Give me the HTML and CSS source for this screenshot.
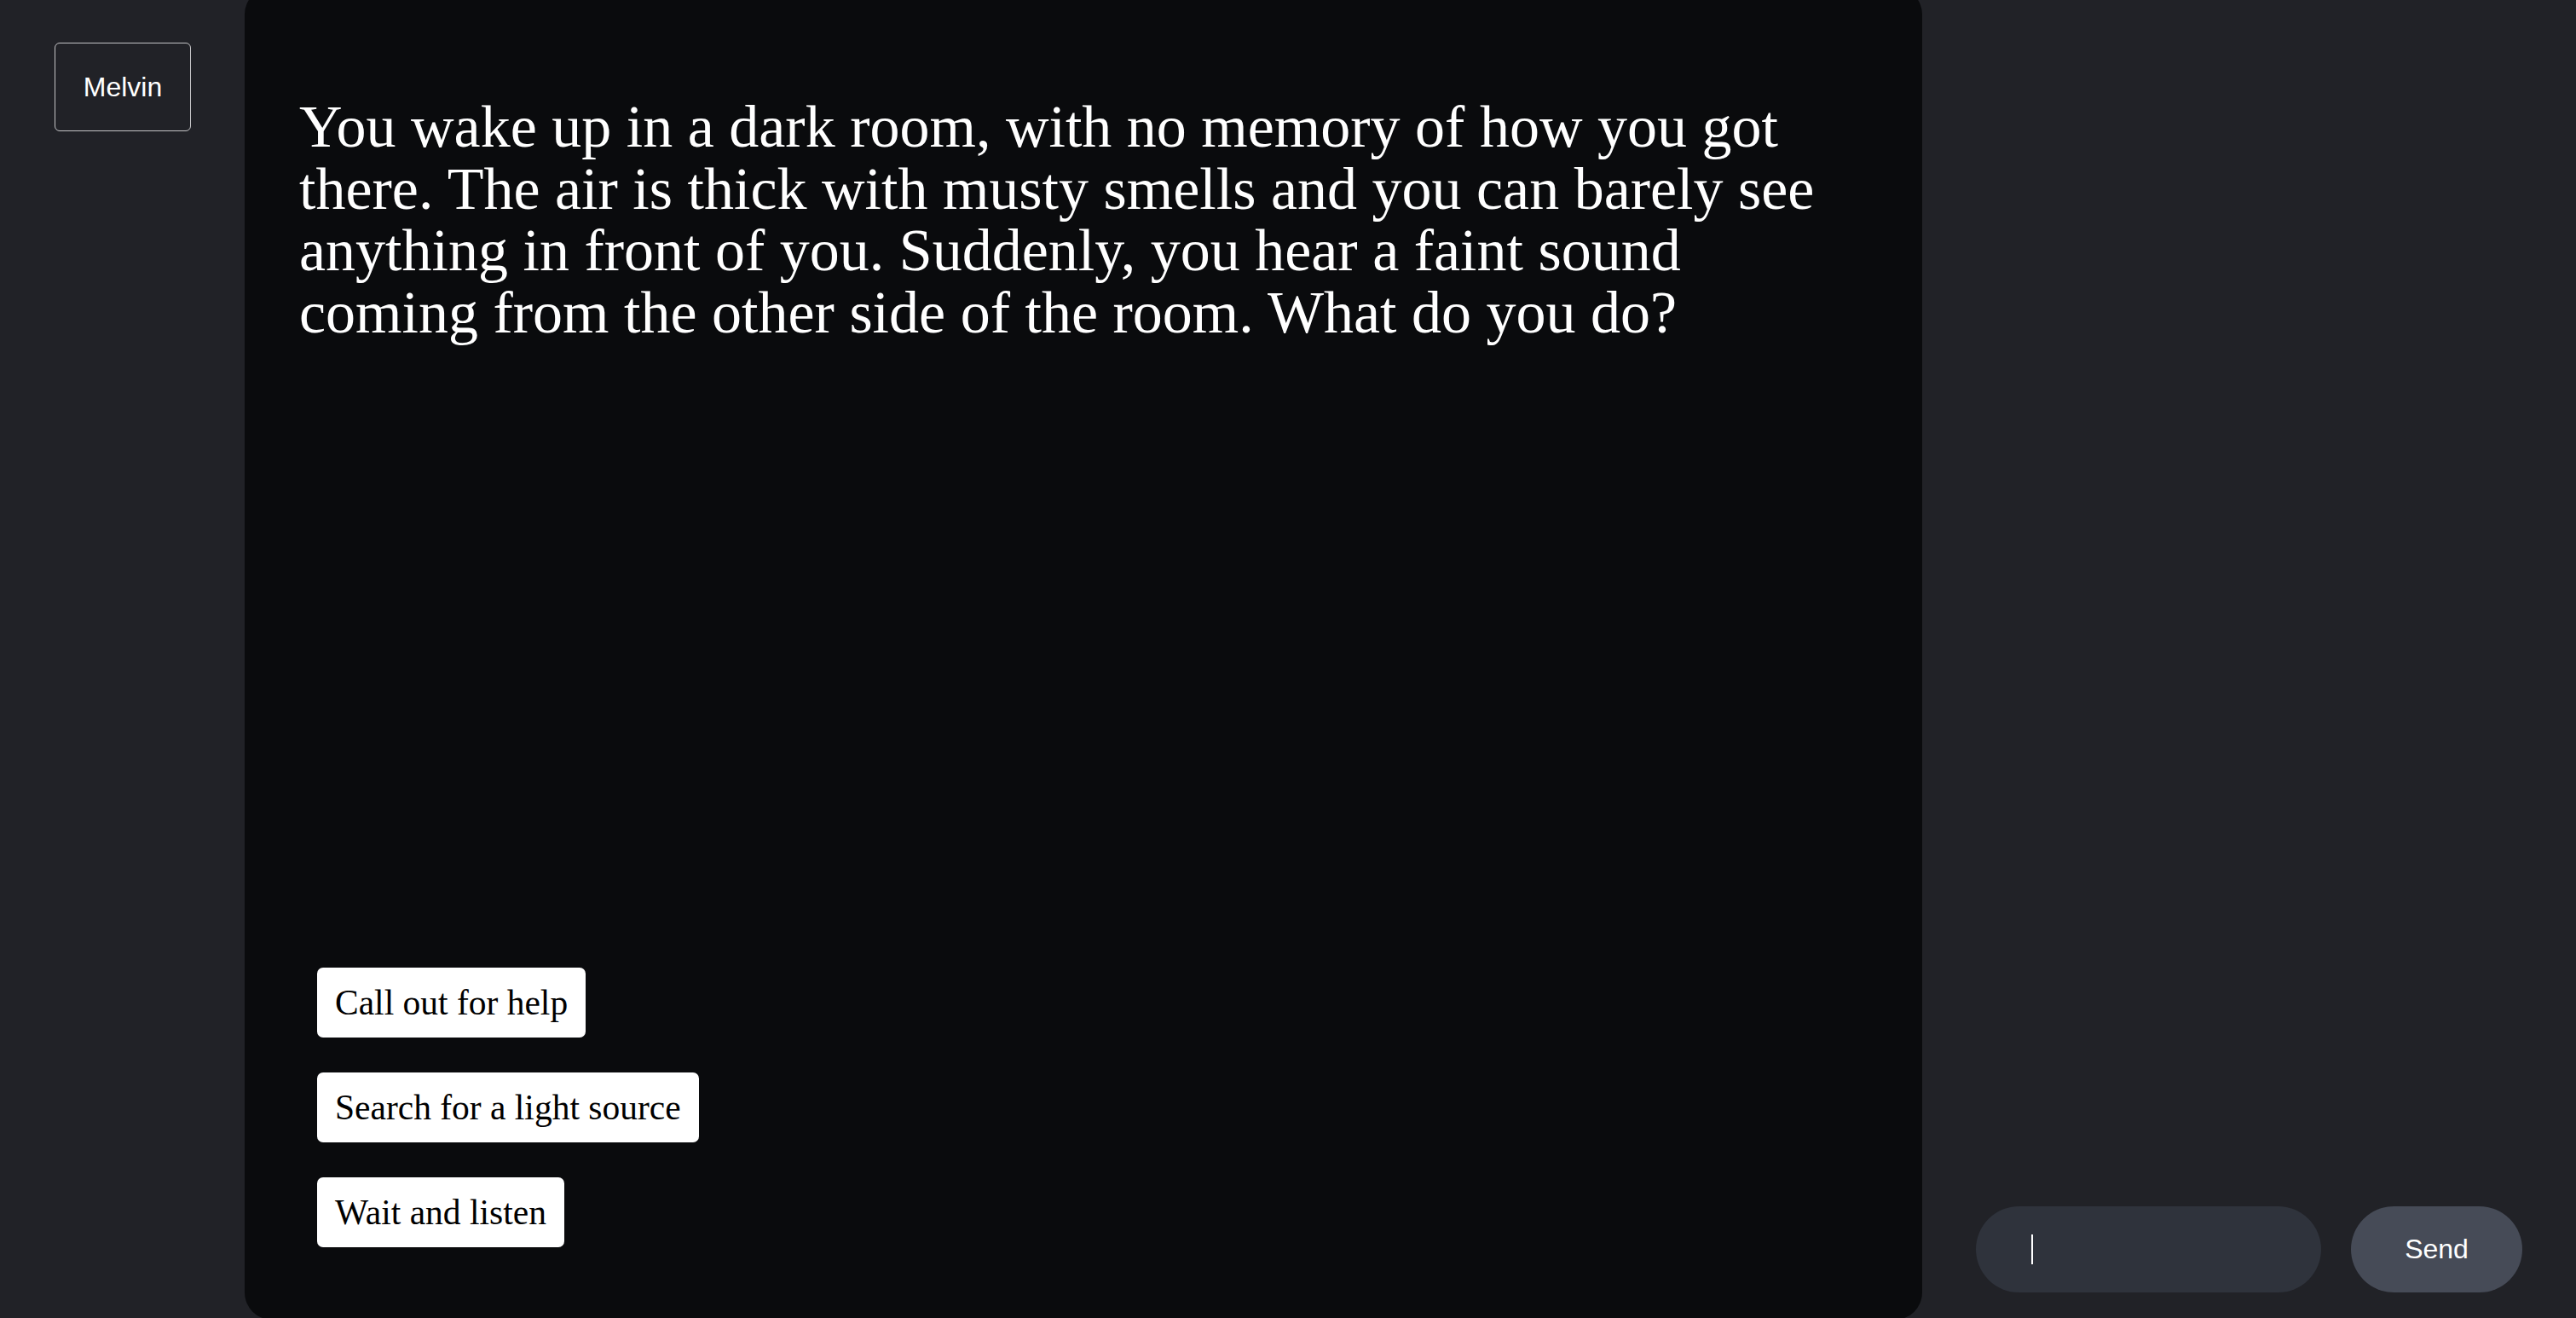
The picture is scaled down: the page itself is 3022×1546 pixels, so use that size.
FILE: index.html
```html
<!DOCTYPE html>
<html lang="en">
<head>
<meta charset="utf-8">
<title>Melvin</title>
<link rel="stylesheet" href="styles.css">
</head>
<body>
<div class="app">
  <aside class="sidebar">
    <button class="name-btn">Melvin</button>
  </aside>
  <main class="story">
    <p class="story-text">You wake up in a dark room, with no memory of how you got there. The air is thick with musty smells and you can barely see anything in front of you. Suddenly, you hear a faint sound coming from the other side of the room. What do you do?</p>
    <div class="choices">
      <button class="choice">Call out for help</button>
      <button class="choice">Search for a light source</button>
      <button class="choice">Wait and listen</button>
    </div>
  </main>
  <section class="chat">
    <form class="chat-form">
      <div class="input-wrap">
        <input class="chat-input" type="text" aria-label="Message">
      </div>
      <button class="send" type="button">Send</button>
    </form>
  </section>
</div>
</body>
</html>
```

FILE: styles.css
```css
html, body {
  margin: 0;
  padding: 0;
  height: 100%;
  overflow: hidden;
  background: #212227;
}

.app {
  display: grid;
  grid-template-columns: 287px 1968px 1fr;
  height: 100vh;
}

.sidebar {
  padding: 50px 0 0 64px;
}

.name-btn {
  width: 160px;
  height: 104px;
  background: transparent;
  border: 1.5px solid #c4c4c6;
  border-radius: 6px;
  color: #ffffff;
  font-family: "Liberation Sans", Arial, sans-serif;
  font-size: 32px;
  padding: 0;
}

.story {
  margin-top: -15px;
  height: calc(100% + 17px);
  box-sizing: border-box;
  background: #0a0b0d;
  border-radius: 32px;
  padding: 128px 64px 85px 64px;
  display: flex;
  flex-direction: column;
}

.story-text {
  margin: 0;
  max-width: 1815px;
  color: #ffffff;
  font-family: "Liberation Serif", "Times New Roman", serif;
  font-size: 70px;
  line-height: 72.5px;
}

.choices {
  margin-top: auto;
  margin-left: 21px;
  display: flex;
  flex-direction: column;
  align-items: flex-start;
  gap: 41px;
}

.choice {
  background: #ffffff;
  color: #000000;
  border: none;
  border-radius: 7px;
  padding: 16px 21px 16px 21px;
  font-family: "Liberation Serif", "Times New Roman", serif;
  font-size: 41.5px;
  line-height: 50px;
}

.chat {
  display: flex;
  align-items: flex-end;
  padding: 0 64px 30px 63px;
}

.chat-form {
  display: flex;
  gap: 35px;
  width: 100%;
  margin: 0;
}

.input-wrap {
  position: relative;
  width: 405px;
  height: 101px;
}

.input-wrap::after {
  content: "";
  position: absolute;
  left: 65px;
  top: 33px;
  width: 2px;
  height: 35px;
  background: #ffffff;
}

.chat-input {
  width: 100%;
  height: 100%;
  box-sizing: border-box;
  border: none;
  outline: none;
  border-radius: 51px;
  background: #2f333c;
  color: #ffffff;
  caret-color: transparent;
  padding: 0 40px 0 64px;
  font-family: "Liberation Sans", Arial, sans-serif;
  font-size: 32px;
}

.send {
  width: 201px;
  height: 101px;
  border: none;
  border-radius: 51px;
  background: #464b57;
  color: #ffffff;
  font-family: "Liberation Sans", Arial, sans-serif;
  font-size: 32px;
  padding: 0;
}
```
